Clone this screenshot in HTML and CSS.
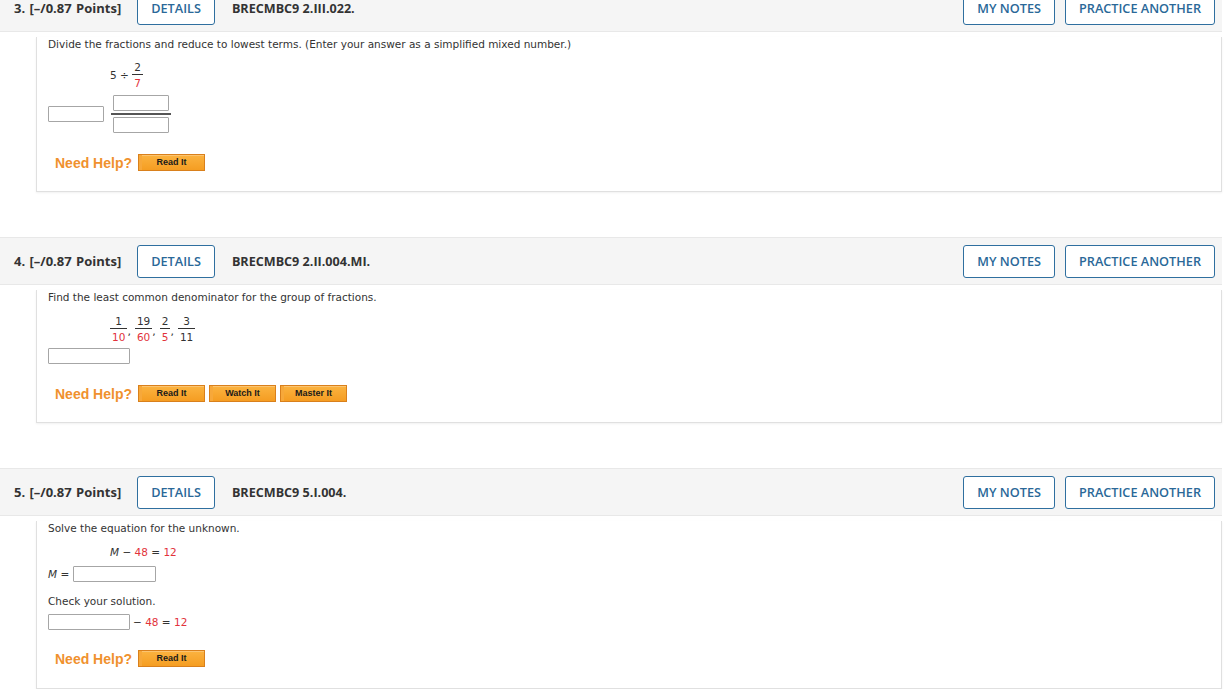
FILE: index.html
```html
<!DOCTYPE html>
<html lang="en">
<head>
<meta charset="utf-8">
<title>Questions</title>
<link rel="stylesheet" href="styles.css">
</head>
<body>
<div class="page">

  <section class="question">
    <div class="qhead">
      <span class="qnum">3. [–/0.87 Points]</span>
      <button class="btn">DETAILS</button>
      <span class="qid">BRECMBC9 2.III.022.</span>
      <span class="spacer"></span>
      <button class="btn notes">MY NOTES</button>
      <button class="btn">PRACTICE ANOTHER</button>
    </div>
    <div class="qbody">
      <p class="prompt">Divide the fractions and reduce to lowest terms. (Enter your answer as a simplified mixed number.)</p>
      <div class="math m3">
        <span class="op">5 ÷ </span>
        <span class="frac"><span class="num">2</span><span class="den red">7</span></span>
      </div>
      <div class="mixed">
        <input class="inp w56" type="text">
        <span class="ifrac">
          <input class="inp w56" type="text">
          <span class="ibar"></span>
          <input class="inp w56" type="text">
        </span>
      </div>
      <div class="help">
        <span class="need">Need Help?</span>
        <button class="hbtn">Read It</button>
      </div>
    </div>
  </section>

  <section class="question">
    <div class="qhead">
      <span class="qnum">4. [–/0.87 Points]</span>
      <button class="btn">DETAILS</button>
      <span class="qid">BRECMBC9 2.II.004.MI.</span>
      <span class="spacer"></span>
      <button class="btn notes">MY NOTES</button>
      <button class="btn">PRACTICE ANOTHER</button>
    </div>
    <div class="qbody">
      <p class="prompt">Find the least common denominator for the group of fractions.</p>
      <div class="math m4">
        <span class="frac"><span class="num">1</span><span class="den red">10</span></span><span class="comma">,</span>
        <span class="frac"><span class="num">19</span><span class="den red">60</span></span><span class="comma">,</span>
        <span class="frac"><span class="num">2</span><span class="den red">5</span></span><span class="comma">,</span>
        <span class="frac"><span class="num">3</span><span class="den">11</span></span>
      </div>
      <div class="row r4">
        <input class="inp w82" type="text">
      </div>
      <div class="help">
        <span class="need">Need Help?</span>
        <button class="hbtn">Read It</button>
        <button class="hbtn">Watch It</button>
        <button class="hbtn">Master It</button>
      </div>
    </div>
  </section>

  <section class="question">
    <div class="qhead">
      <span class="qnum">5. [–/0.87 Points]</span>
      <button class="btn">DETAILS</button>
      <span class="qid">BRECMBC9 5.I.004.</span>
      <span class="spacer"></span>
      <button class="btn notes">MY NOTES</button>
      <button class="btn">PRACTICE ANOTHER</button>
    </div>
    <div class="qbody b5">
      <p class="prompt">Solve the equation for the unknown.</p>
      <div class="math m5"><i>M</i> − <span class="red">48</span> = <span class="red">12</span></div>
      <div class="row r5a"><i class="var">M</i>&nbsp;=&nbsp;<input class="inp w83" type="text"></div>
      <p class="prompt check">Check your solution.</p>
      <div class="row r5b"><input class="inp w82" type="text"><span class="tail">− <span class="red">48</span> = <span class="red">12</span></span></div>
      <div class="help h5">
        <span class="need">Need Help?</span>
        <button class="hbtn">Read It</button>
      </div>
    </div>
  </section>

</div>
</body>
</html>
```

FILE: styles.css
```css
html, body {
  margin: 0;
  padding: 0;
  background: #ffffff;
}

body {
  font-family: "DejaVu Sans", Verdana, sans-serif;
  color: #333333;
}

.page {
  margin-top: -16px;
  width: 1222px;
}

.question + .question {
  margin-top: 45px;
}

.qhead {
  display: flex;
  align-items: center;
  height: 48px;
  box-sizing: border-box;
  padding: 0 7px 0 14px;
  background: #f5f5f5;
  border-top: 1px solid #e8e8e8;
  border-bottom: 1px solid #e8e8e8;
  font-family: "Open Sans", sans-serif;
}

.qnum {
  font-size: 13px;
  font-weight: 700;
  color: #333;
  margin-right: 16px;
  word-spacing: 1px;
}

.qid {
  font-size: 12.6px;
  font-weight: 700;
  color: #333;
  margin-left: 17px;
}

.spacer {
  flex: 1;
}

.btn {
  height: 33px;
  box-sizing: border-box;
  padding: 0 13px;
  background: #ffffff;
  border: 1px solid #2f6f9f;
  border-radius: 3px;
  color: #2a6898;
  font-family: "Open Sans", sans-serif;
  font-size: 12.7px;
  font-weight: 600;
  line-height: 1;
  cursor: pointer;
}

.btn.notes {
  margin-right: 10px;
}

.qbody {
  margin-left: 36px;
  border: 1px solid #e0e0e0;
  border-top: none;
  padding: 0 11px 20px;
  box-shadow: 0 1px 2px rgba(0, 0, 0, 0.06);
  font-size: 10px;
}

.qbody.b5 {
  padding-bottom: 21px;
}

.prompt {
  margin: 5px 0 0;
  line-height: 14px;
  font-size: 10.5px;
}

.red {
  color: #e2333b;
}

.math {
  margin-left: 62px;
  font-size: 10.5px;
  display: flex;
  align-items: center;
}

.m3 {
  margin-top: 10px;
}

.m4 {
  margin-top: 11px;
}

.m5 {
  margin-top: 10px;
  line-height: 14px;
  display: block;
}

.op {
  white-space: pre;
}

.frac {
  display: inline-flex;
  flex-direction: column;
  align-items: stretch;
  text-align: center;
}

.frac .num {
  line-height: 12px;
  padding: 0 2px 1px;
  border-bottom: 1px solid #333;
}

.frac .den {
  line-height: 12px;
  padding: 2px 2px 0;
}

.comma {
  align-self: center;
  margin-top: 5px;
  margin-right: 4px;
  font-size: 11px;
}

.mixed {
  display: flex;
  align-items: center;
  margin-top: 6px;
}

.ifrac {
  display: inline-flex;
  flex-direction: column;
  align-items: center;
  margin-left: 7px;
}

.ibar {
  width: 60px;
  height: 2px;
  background: #555;
  margin: 2px 0 2px;
}

.inp {
  height: 16px;
  box-sizing: border-box;
  border: 1px solid #a6a6a6;
  border-radius: 1px;
  background: #fff;
  margin: 0;
  padding: 0;
}

.w56 { width: 56px; }
.w82 { width: 82px; }
.w83 { width: 83px; }

.row {
  display: flex;
  align-items: center;
  font-size: 10.5px;
}

.r4 {
  margin-top: 5px;
}

.r5a {
  margin-top: 7px;
}

.var {
  font-size: 10.5px;
}

.check {
  margin-top: 12px;
}

.r5b {
  margin-top: 6px;
}

.tail {
  margin-left: 3px;
}

.help {
  display: flex;
  align-items: center;
  margin-top: 21px;
  padding-left: 7px;
}

.help.h5 {
  margin-top: 20px;
}

.need {
  font-family: "Liberation Sans", Arial, sans-serif;
  font-weight: 700;
  font-size: 14px;
  color: #f0912e;
  margin-right: 6px;
}

.hbtn {
  width: 67px;
  height: 17px;
  box-sizing: border-box;
  margin: 0 4px 0 0;
  padding: 0;
  border: 1px solid #d9801c;
  background: linear-gradient(#fbb340, #f59d22);
  box-shadow: inset 3px 0 0 #f7a83a, inset 0 1px 0 #fcc470;
  font-family: "Liberation Sans", Arial, sans-serif;
  font-weight: 700;
  font-size: 9px;
  color: #1a1a1a;
  line-height: 15px;
}
```
